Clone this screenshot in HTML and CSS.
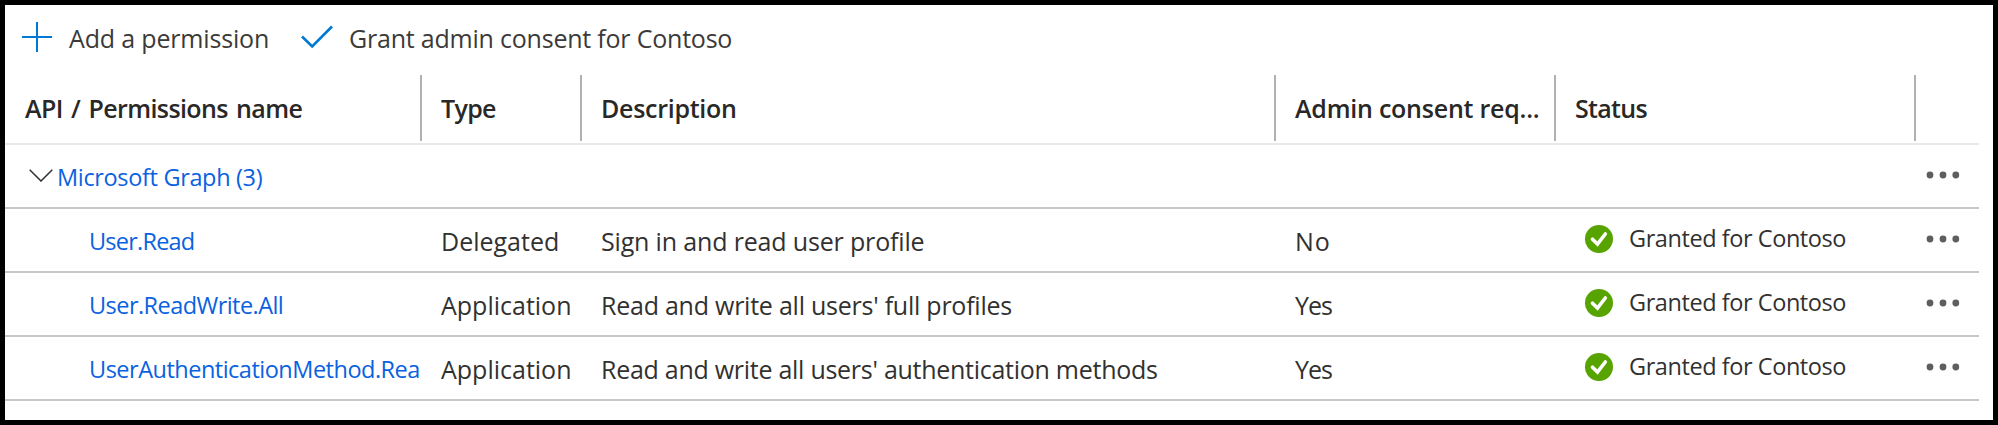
FILE: index.html
```
<!DOCTYPE html>
<html lang="en">
<head>
<meta charset="utf-8">
<title>API permissions</title>
<link rel="stylesheet" href="styles.css">
</head>
<body>
<svg width="0" height="0" class="defs">
  <symbol id="dots" viewBox="0 0 34 8"><circle cx="4" cy="4" r="3.4"/><circle cx="17" cy="4" r="3.4"/><circle cx="29.8" cy="4" r="3.4"/></symbol>
  <symbol id="ok" viewBox="0 0 28 28"><circle cx="14" cy="14" r="14" fill="#57a300"/><path d="M7.5 14.2l5 4.8 7.8-10" fill="none" stroke="#fff" stroke-width="3.6" stroke-linecap="round"/></symbol>
</svg>
<main class="panel">
  <div class="toolbar">
    <div class="command">
      <svg class="plus" width="30" height="30" viewBox="0 0 30 30"><path d="M15 0v30M0 15h30"/></svg>
      <span class="add">Add a permission</span>
    </div>
    <div class="command">
      <svg class="check" width="32" height="24" viewBox="0 0 32 24"><path d="M1 11.5l10.2 10L31 1.5"/></svg>
      <span class="grant">Grant admin consent for Contoso</span>
    </div>
  </div>
  <div class="table">
    <div class="row head">
      <div class="cell first"><span class="h-api">API / Permissions name</span></div>
      <div class="cell"><span class="h-type">Type</span></div>
      <div class="cell"><span class="h-desc">Description</span></div>
      <div class="cell"><span class="h-admin">Admin consent req...</span></div>
      <div class="cell"><span class="h-status">Status</span></div>
      <div class="cell last"></div>
    </div>
    <div class="row group">
      <div class="cell group-name">
        <svg class="chevron" width="24" height="13" viewBox="0 0 24 13"><path d="M.7.7L12 12 23.3.7"/></svg>
        <a class="link graph">Microsoft Graph (3)</a>
      </div>
      <div class="cell more"><svg width="34" height="8"><use href="#dots"/></svg></div>
    </div>
    <div class="row">
      <div class="cell name"><a class="link l1">User.Read</a></div>
      <div class="cell"><span class="deleg">Delegated</span></div>
      <div class="cell"><span class="d1">Sign in and read user profile</span></div>
      <div class="cell"><span class="no">No</span></div>
      <div class="cell status"><svg width="28" height="28"><use href="#ok"/></svg><span>Granted for Contoso</span></div>
      <div class="cell more"><svg width="34" height="8"><use href="#dots"/></svg></div>
    </div>
    <div class="row">
      <div class="cell name"><a class="link l2">User.ReadWrite.All</a></div>
      <div class="cell"><span class="app">Application</span></div>
      <div class="cell"><span class="d2">Read and write all users' full profiles</span></div>
      <div class="cell"><span class="yes">Yes</span></div>
      <div class="cell status"><svg width="28" height="28"><use href="#ok"/></svg><span>Granted for Contoso</span></div>
      <div class="cell more"><svg width="34" height="8"><use href="#dots"/></svg></div>
    </div>
    <div class="row">
      <div class="cell name"><a class="link l3">UserAuthenticationMethod.Rea</a></div>
      <div class="cell"><span class="app">Application</span></div>
      <div class="cell"><span class="d3">Read and write all users' authentication methods</span></div>
      <div class="cell"><span class="yes">Yes</span></div>
      <div class="cell status"><svg width="28" height="28"><use href="#ok"/></svg><span>Granted for Contoso</span></div>
      <div class="cell more"><svg width="34" height="8"><use href="#dots"/></svg></div>
    </div>
  </div>
</main>
</body>
</html>
```
FILE: styles.css
```
* { box-sizing: border-box; }
body { margin: 0; background: #fff; }
.defs { display: none; }
.panel {
  width: 1998px;
  height: 425px;
  border: 5px solid #000;
  overflow: hidden;
  font: 25px/34px "Open Sans", "Noto Sans", sans-serif;
  color: #323130;
  white-space: nowrap;
}
svg { flex: none; display: block; }

/* Command bar */
.toolbar { display: flex; height: 67px; padding-left: 17px; }
.command { display: flex; align-items: center; }
.command + .command { margin-left: 33px; }
.command span { margin: -1px 0 0 17px; color: #3b3a39; }
.plus, .check { fill: none; stroke: #0078d4; stroke-width: 2; }
.plus { margin-top: -3px; }
.check { margin-top: -3px; stroke-width: 2.6; }
.command .add { letter-spacing: -.17px; width: 199px; }
.command .grant { letter-spacing: -.21px; margin-left: 16px; }

/* Permissions grid */
.table { width: 1974px; }
.row {
  display: grid;
  grid-template-columns: 417px 160px 694px 280px 360px 63px;
  height: 64px;
  border-bottom: 2px solid #c8c8c8;
}
.cell { display: flex; align-items: center; padding: 2px 0 0 19px; min-width: 0; }
.head { height: 73px; padding: 3px 0 2px; border-bottom-color: #e9e9e9; font-weight: 600; color: #292827; }
.head .cell { padding-top: 0; border-right: 2px solid #b1b1b1; }
.head .first { padding-left: 20px; }
.head .last { border-right: 0; }
.group { grid-template-columns: 1911px 63px; }
.cell.group-name { padding: 1px 0 0 24px; }
.chevron { margin: -3px 4px 0 0; fill: none; stroke: #323130; stroke-width: 1.5; }
.link { font-size: 23.5px; color: #0a62e0; }
.cell.name { padding: 1px 0 0 84px; }
.cell.status { padding: 0 0 2px 29px; font-size: 23.5px; letter-spacing: -.43px; }
.status span { margin: -2px 0 0 16px; }
.cell.more { padding: 0 0 3px 10px; }
.more svg { fill: #605e5c; }

/* Tracking per label */
.h-api { letter-spacing: -.62px; word-spacing: 2.5px; }
.h-type { letter-spacing: -.67px; }
.h-desc { letter-spacing: -.28px; }
.h-admin { letter-spacing: -.23px; }
.h-status { letter-spacing: -.7px; }
.graph { letter-spacing: -.34px; }
.l1 { letter-spacing: -.78px; }
.l2 { letter-spacing: -.55px; }
.l3 { letter-spacing: -.5px; }
.deleg { letter-spacing: 0; }
.app { letter-spacing: 0; }
.d1 { letter-spacing: -.16px; }
.d2 { letter-spacing: -.24px; }
.d3 { letter-spacing: -.27px; }
.no { letter-spacing: 1px; }
.yes { letter-spacing: -1px; }
```
